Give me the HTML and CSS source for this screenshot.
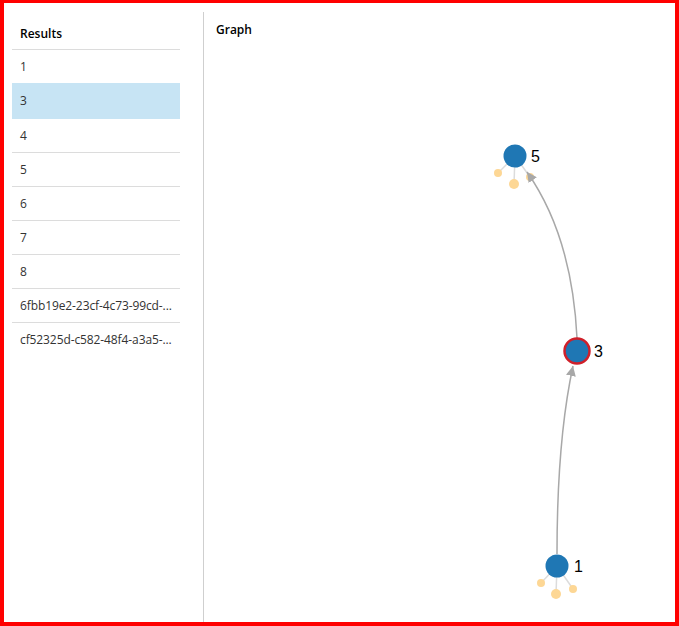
FILE: index.html
```html
<!DOCTYPE html>
<html>
<head>
<meta charset="utf-8">
<link rel="stylesheet" href="styles.css">
</head>
<body>
<div class="frame">
  <aside class="sidebar">
    <div class="side-head">Results</div>
    <div class="row">1</div>
    <div class="row selected">3</div>
    <div class="row">4</div>
    <div class="row">5</div>
    <div class="row">6</div>
    <div class="row">7</div>
    <div class="row">8</div>
    <div class="row">6fbb19e2-23cf-4c73-99cd-...</div>
    <div class="row last">cf52325d-c582-48f4-a3a5-...</div>
  </aside>
  <section class="graph">
    <div class="graph-head">Graph</div>
    <svg class="canvas" viewBox="204 12 471 610" width="471" height="610" xmlns="http://www.w3.org/2000/svg">
      <defs>
        <marker id="arr" viewBox="0 0 10 10" refX="10" refY="5" markerWidth="10" markerHeight="10" markerUnits="userSpaceOnUse" orient="auto">
          <path d="M0,0 L10,5 L0,10 z" fill="#a8a8a8"/>
        </marker>
      </defs>
      <g stroke="#dcdcdc" stroke-width="1.5">
        <line x1="515" y1="156" x2="498" y2="173"/>
        <line x1="515" y1="156" x2="514" y2="184"/>
        <line x1="515" y1="156" x2="530" y2="177"/>
        <line x1="557" y1="566" x2="541" y2="583"/>
        <line x1="557" y1="566" x2="556" y2="594"/>
        <line x1="557" y1="566" x2="573" y2="589"/>
      </g>
      <g fill="#fdd795">
        <circle cx="498" cy="173" r="4"/>
        <circle cx="514" cy="184" r="5"/>
        <circle cx="530" cy="177" r="4"/>
        <circle cx="541" cy="583" r="4"/>
        <circle cx="556" cy="594" r="5"/>
        <circle cx="573" cy="589" r="4"/>
      </g>
      <g fill="none" stroke="#a8a8a8" stroke-width="1.5">
        <path d="M557,554 Q557,440 573,366" marker-end="url(#arr)"/>
        <path d="M577,338 Q572,236 527,172" marker-end="url(#arr)"/>
      </g>
      <circle cx="515" cy="156" r="11.5" fill="#1f77b4"/>
      <circle cx="577" cy="351" r="12.5" fill="#1f77b4" stroke="#d0202a" stroke-width="2.5"/>
      <circle cx="557" cy="566" r="11.5" fill="#1f77b4"/>
      <g class="lbl">
        <text x="531" y="162">5</text>
        <text x="594" y="357">3</text>
        <text x="574" y="572">1</text>
      </g>
    </svg>
  </section>
</div>
</body>
</html>
```
FILE: styles.css
```css
html, body {
  margin: 0;
  padding: 0;
  background: #fff;
}
.frame {
  box-sizing: border-box;
  width: 679px;
  height: 626px;
  border: 4px solid #ff0000;
  border-top-width: 3px;
  padding-top: 9px;
  display: flex;
  font-family: "Open Sans", "Noto Sans", sans-serif;
  font-size: 12px;
  color: #333;
}
.sidebar {
  box-sizing: border-box;
  width: 200px;
  padding: 0 23px 0 8px;
  border-right: 1px solid #cfcfcf;
  flex: none;
}
.side-head {
  box-sizing: border-box;
  height: 38px;
  padding: 14px 8px 0;
  line-height: 16px;
  font-weight: 600;
  color: #000;
  border-bottom: 1px solid #dcdcdc;
}
.row {
  height: 33px;
  line-height: 33px;
  padding: 0 8px;
  border-bottom: 1px solid #dcdcdc;
  white-space: nowrap;
  overflow: hidden;
  letter-spacing: -0.1px;
}
.row.selected {
  margin-top: -1px;
  height: 35px;
  line-height: 35px;
  background: #c7e4f4;
  border-bottom-color: #c7e4f4;
}
.row.last {
  border-bottom: none;
}
.graph {
  flex: 1;
  position: relative;
}
.graph-head {
  padding: 10px 12px 0;
  line-height: 16px;
  font-weight: 600;
  color: #000;
}
.canvas {
  position: absolute;
  left: 0;
  top: 0;
}
.lbl text {
  font-family: "Liberation Sans", Arial, sans-serif;
  font-size: 16px;
  fill: #000;
}
```
